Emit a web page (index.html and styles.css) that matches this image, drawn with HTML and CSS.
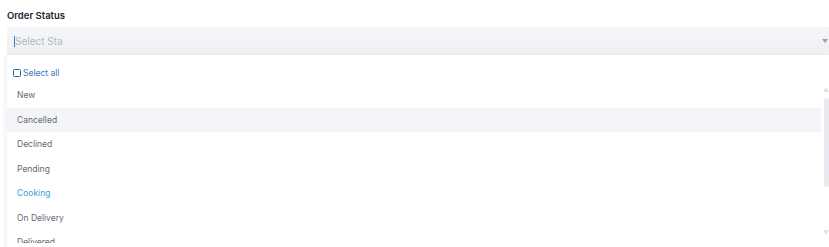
FILE: index.html
```html
<!DOCTYPE html>
<html>
<head>
<meta charset="utf-8">
<link rel="stylesheet" href="styles.css">
</head>
<body>
<div class="field">
  <div class="label">Order Status</div>
  <div class="select">
    <span class="caret"></span><span class="placeholder">Select Sta</span>
    <span class="arrow"></span>
  </div>
  <div class="panel">
    <div class="select-all"><span class="checkbox"></span>Select all</div>
    <div class="scroll">
      <ul class="options">
        <li class="option">New</li>
        <li class="option hover">Cancelled</li>
        <li class="option">Declined</li>
        <li class="option">Pending</li>
        <li class="option active">Cooking</li>
        <li class="option">On Delivery</li>
        <li class="option">Delivered</li>
      </ul>
      <div class="scrollbar">
        <span class="sb-up"></span>
        <span class="sb-thumb"></span>
        <span class="sb-down"></span>
      </div>
    </div>
  </div>
</div>
</body>
</html>
```

FILE: styles.css
```css
html, body {
  margin: 0;
  padding: 0;
  background: #ffffff;
  overflow: hidden;
}
body {
  width: 829px;
  height: 247px;
  font-family: Inter, "Liberation Sans", sans-serif;
}
.field {
  padding: 10px 0 0 7px;
}
.label {
  font-size: 9.5px;
  font-weight: 600;
  color: #1f2230;
  line-height: 12px;
  height: 12px;
  margin-bottom: 5px;
}
.select {
  height: 28px;
  background: linear-gradient(#f5f6f9, #eff0f4);
  border-radius: 3px 0 0 0;
  display: flex;
  align-items: center;
  padding-left: 7px;
}
.caret {
  width: 1px;
  height: 11px;
  background: #2f7fd0;
}
.placeholder {
  font-size: 10px;
  color: #b3b6c2;
}
.arrow {
  margin-left: auto;
  margin-right: 1px;
  width: 0;
  height: 0;
  border-left: 3px solid transparent;
  border-right: 3px solid transparent;
  border-top: 4px solid #9a9ea9;
}
.panel {
  background: #ffffff;
  box-shadow: -2px 0 4px rgba(30, 40, 70, 0.07);
  padding-bottom: 4px;
}
.select-all {
  height: 28px;
  padding-top: 8px;
  box-sizing: border-box;
  display: flex;
  align-items: center;
  padding-left: 6px;
  font-size: 8.5px;
  color: #3b78bd;
}
.checkbox {
  width: 6px;
  height: 6px;
  border: 1px solid #2c5f9e;
  border-radius: 1.5px;
  margin-right: 2px;
}
.scroll {
  display: flex;
  height: 160px;
  overflow: hidden;
}
.options {
  list-style: none;
  margin: 0;
  padding: 0;
  flex: 1;
}
.option {
  height: 24.5px;
  display: flex;
  align-items: center;
  padding-left: 10px;
  font-size: 8.5px;
  color: #646978;
}
.option.hover {
  background: #f4f5f8;
}
.option.active {
  color: #3d9ad6;
}
.scrollbar {
  width: 6px;
  margin-left: 2px;
  display: flex;
  flex-direction: column;
  align-items: center;
  padding-top: 4px;
}
.sb-up {
  width: 0;
  height: 0;
  border-left: 3px solid transparent;
  border-right: 3px solid transparent;
  border-bottom: 5px solid #dfe2e9;
}
.sb-thumb {
  width: 5px;
  height: 89px;
  margin-top: 6px;
  margin-left: 1px;
  background: #e8eaf0;
  border-radius: 2px;
}
.sb-down {
  margin-top: 43px;
  width: 0;
  height: 0;
  border-left: 3px solid transparent;
  border-right: 3px solid transparent;
  border-top: 5px solid #dfe2e9;
}
```
